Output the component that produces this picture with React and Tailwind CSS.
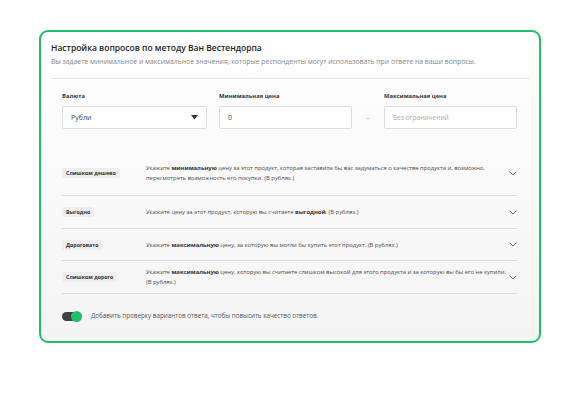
import React from "react";

const rows = [
  {
    badge: "Слишком дешево",
    h: "h-[45px]",
    text: (
      <>
        Укажите <b className="font-bold text-[#333]">минимальную</b> цену за этот продукт, которая заставила бы вас задуматься о качестве продукта и, возможно, пересмотреть возможность его покупки. (В рублях.)
      </>
    ),
  },
  {
    badge: "Выгодно",
    h: "h-[33px]",
    text: (
      <>
        Укажите цену за этот продукт, которую вы считаете <b className="font-bold text-[#333]">выгодной</b>. (В рублях.)
      </>
    ),
  },
  {
    badge: "Дороговато",
    h: "h-[32px]",
    text: (
      <>
        Укажите <b className="font-bold text-[#333]">максимальную</b> цену, за которую вы могли бы купить этот продукт. (В рублях.)
      </>
    ),
  },
  {
    badge: "Слишком дорого",
    h: "h-[33px]",
    text: (
      <>
        Укажите <b className="font-bold text-[#333]">максимальную</b> цену, которую вы считаете слишком высокой для этого продукта и за которую вы бы его не купили. (В рублях.)
      </>
    ),
  },
];

function Chevron() {
  return (
    <svg width="8" height="5" viewBox="0 0 8 5" fill="none" className="block">
      <path d="M1 1l3 3 3-3" stroke="#666" strokeWidth="0.9" strokeLinecap="round" strokeLinejoin="round" />
    </svg>
  );
}

export default function App() {
  return (
    <div className="w-[567px] h-[400px] bg-white text-[7px] leading-[10px]" style={{ fontFamily: '"Open Sans", "Noto Sans", sans-serif' }}>
      <div className="pt-[30px] pl-[39px]">
        <div className="w-[502px] h-[313px] rounded-[9px] border-2 border-[#1fbf6a] bg-gradient-to-b from-[#ffffff] to-[#f4f4f4] px-[10px] pt-[10px]">
          <div className="text-[8.5px] font-semibold text-[#222] leading-[12px]">Настройка вопросов по методу Ван Вестендорпа</div>
          <div className="text-[6.85px] text-[#888] leading-[10px] mt-[3px]">
            Вы задаете минимальное и максимальное значения, которые респонденты могут использовать при ответе на ваши вопросы.
          </div>
          <div className="h-px bg-[#e4e4e4] mt-[11px]" />

          <div className="pl-[11px] pr-[12px]">
            <div className="flex items-end mt-[13px]">
              <div className="w-[145px]">
                <div className="text-[5.8px] font-bold text-[#333] leading-[8px]">Валюта</div>
                <div className="mt-[6px] h-[23px] bg-white border border-[#dedede] rounded-[2px] flex items-center justify-between px-[8px]">
                  <span className="text-[7px] text-[#444]">Рубли</span>
                  <svg width="7" height="5" viewBox="0 0 7 5"><path d="M0 0h7L3.5 4.5z" fill="#333" /></svg>
                </div>
              </div>
              <div className="w-[133px] ml-[12px]">
                <div className="text-[5.8px] font-bold text-[#333] leading-[8px]">Минимальная цена</div>
                <div className="mt-[6px] h-[23px] bg-white border border-[#dedede] rounded-[2px] flex items-center px-[8px]">
                  <span className="text-[7px] text-[#444]">0</span>
                </div>
              </div>
              <div className="w-[32px] h-[23px] flex items-center justify-center text-[7px] text-[#aaa]">–</div>
              <div className="w-[133px]">
                <div className="text-[5.8px] font-bold text-[#333] leading-[8px]">Максимальная цена</div>
                <div className="mt-[6px] h-[23px] bg-white border border-[#dedede] rounded-[2px] flex items-center px-[8px]">
                  <span className="text-[6.6px] text-[#aaa]">Без ограничений</span>
                </div>
              </div>
            </div>

            <div className="mt-[22px] text-[6px] leading-[10px]">
              {rows.map((r, i) => (
                <div key={i} className={`flex items-center border-b border-[#dcdcdc] ${r.h}`}>
                  <div className="w-[84px] shrink-0 flex items-center">
                    <span className="block bg-[#eeeeee] rounded-[2px] px-[4px] py-[1px] text-[5.3px] font-bold text-[#333] leading-[8px]">{r.badge}</span>
                  </div>
                  <div className="flex-1 text-[5.9px] text-[#4a4a4a] leading-[10px] pr-[2px] tracking-[-0.03px]">{r.text}</div>
                  <div className="w-[8px] shrink-0 flex items-center"><Chevron /></div>
                </div>
              ))}
            </div>

            <div className="flex items-center mt-[17px]">
              <div className="relative w-[19px] h-[9px] rounded-full bg-[#3c4146]">
                <div className="absolute right-[-1px] top-[-1px] w-[11px] h-[11px] rounded-full bg-[#1fbf6a]" />
              </div>
              <span className="ml-[10px] text-[6.3px] leading-[10px] text-[#555]">Добавить проверку вариантов ответа, чтобы повысить качество ответов.</span>
            </div>
          </div>
        </div>
      </div>
    </div>
  );
}
